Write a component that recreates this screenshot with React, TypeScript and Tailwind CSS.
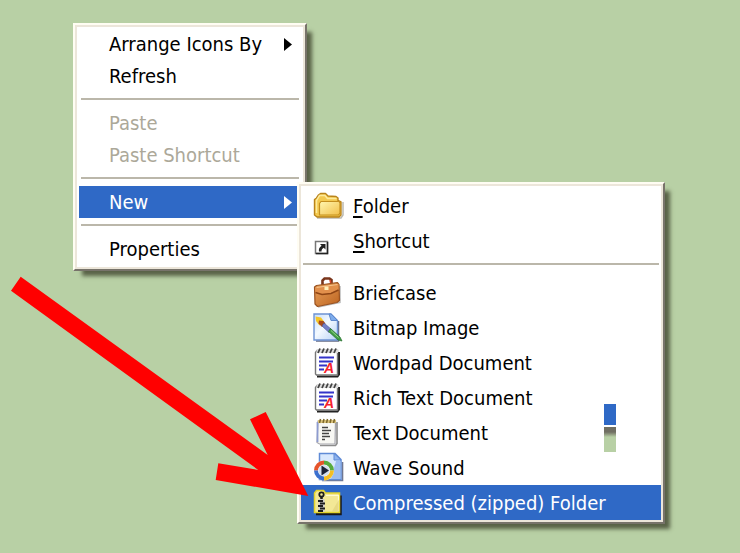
import type { ReactNode } from "react";

function FolderIcon() {
  return (
    <svg viewBox="0 0 32 32" className="size-8" aria-hidden="true">
      <defs>
        <linearGradient id="folderFront" x1="0" y1="0" x2="1" y2="1">
          <stop offset="0" stopColor="#fff6b0" />
          <stop offset="1" stopColor="#f2c04a" />
        </linearGradient>
      </defs>
      <path d="M4 28h24l2-3V12" fill="none" stroke="#8d8a7c" strokeWidth="1.5" opacity=".6" />
      <path
        d="M1.500 25V9.500l2-1.500 2-3 2-1.500h5l2.500 2.500 8 .5 2 1.500v2.500l3 1.500v13l-2 2h-22z"
        fill="#f3c94f"
        stroke="#b9831a"
        strokeWidth="1.4"
        strokeLinejoin="round"
      />
      <path d="M3.500 23V10.500l3-5h5.500l2.500 3h9" fill="none" stroke="#fdeb9c" strokeWidth="1.500" />
      <path
        d="M6.500 25V13.500l1.500-2H26l1 1.500v10l-1.500 2z"
        fill="url(#folderFront)"
        stroke="#c48f1f"
        strokeWidth="1.2"
        strokeLinejoin="round"
      />
    </svg>
  );
}

function ShortcutIcon() {
  return (
    <svg viewBox="0 0 32 32" className="size-8" aria-hidden="true">
      <rect x="2.500" y="16.500" width="12" height="12" fill="#fff" stroke="#777" strokeWidth="1.500" />
      <path d="M3 28.500h11.500V17" fill="none" stroke="#222" strokeWidth="1.500" />
      <path d="M7 19h5.500v5.500l-1.800-1.800c-1.500.8-2.200 2-2.200 3.800H6c-.6-2.300.4-4.300 2.600-5.800z" fill="#222" />
    </svg>
  );
}

function BriefcaseIcon() {
  return (
    <svg viewBox="0 0 32 32" className="size-8" aria-hidden="true">
      <defs>
        <linearGradient id="leather" x1="0" y1="0" x2="1" y2="1">
          <stop offset="0" stopColor="#e9a15c" />
          <stop offset="1" stopColor="#bd6420" />
        </linearGradient>
      </defs>
      <path d="M5 30l22-4.500V9" fill="none" stroke="#777" strokeWidth="1.500" opacity=".5" />
      <path d="M9.500 9V3.500l2-2h5l2 1.500V8" fill="none" stroke="#79351b" strokeWidth="2.600" />
      <path d="M17 3l1 4" stroke="#d5482b" strokeWidth="1.500" />
      <path
        d="M1.500 10l2-1.500L24.500 5.500l1.500 2 .5 16-2.500 2L4.500 29.500 2 27z"
        fill="url(#leather)"
        stroke="#9a5220"
        strokeWidth="1.200"
        strokeLinejoin="round"
      />
      <path d="M2.500 10.500l23-3.500v6l-7.500 3-9 1-6.500-2z" fill="#e2904c" />
      <path d="M2.500 15.500l6.500 2 9-1 7.500-3.500" fill="none" stroke="#8f4515" strokeWidth="1.400" />
      <path d="M3.500 10.500l21-3" stroke="#f5c58e" strokeWidth="1.200" />
      <rect x="11.500" y="9.500" width="4" height="3.500" fill="#fff0b8" />
    </svg>
  );
}

function BitmapIcon() {
  return (
    <svg viewBox="0 0 32 32" className="size-8" aria-hidden="true">
      <defs>
        <linearGradient id="canvas" x1="0" y1="0" x2="1" y2="1">
          <stop offset="0" stopColor="#c6defb" />
          <stop offset=".45" stopColor="#f3f9ff" />
          <stop offset="1" stopColor="#b7d1f5" />
        </linearGradient>
      </defs>
      <path d="M3 29h22.500V9" fill="none" stroke="#666c85" strokeWidth="1.500" />
      <path d="M1 2H18l6.500 6.500V28H1z" fill="url(#canvas)" stroke="#6d93d3" strokeWidth="1.400" />
      <path d="M16 2l2 6.500h6.500L18 2z" fill="#7dacec" stroke="#5d88cd" />
      <path d="M2.500 4.500l5.500 1 3 4-4.500 4-3.500-4.500z" fill="#f6c626" />
      <path d="M6 8.500l4.500.5 2 2.500-3.500 3.500-3.500-3.500z" fill="#a84b1c" />
      <path d="M11 11l7.500 6.500-2.500 3-7-6.500z" fill="#7480c8" stroke="#414c93" strokeWidth=".6" />
      <path d="M17.500 16.500l9.500 8.500 2 4-4-1-9.500-8.500z" fill="#3f9c42" stroke="#236b2b" strokeWidth=".7" />
      <path d="M18 18.500l7.500 7" stroke="#95d68a" strokeWidth="1" />
    </svg>
  );
}

function WordpadIcon() {
  return (
    <svg viewBox="0 0 32 32" className="size-8" aria-hidden="true">
      <path d="M4 29.500h20.500l1.500-2V5" fill="none" stroke="#222" strokeWidth="2" />
      <path d="M2.500 27V5.500l1.500-2h20.500V28H3.500z" fill="#fff" stroke="#777" strokeWidth="1.400" />
      <path d="M3.500 4.500H25" stroke="#ddd" strokeWidth="3" />
      <path
        d="M5 6l2-4.500M9 6l2-4.500M13 6l2-4.500M17 6l2-4.500M21 6l2-4.500"
        stroke="#444"
        strokeWidth="1.800"
      />
      <path d="M6 10.500h15M6 14.500h14M6 18.500h8M6 22.500h5" stroke="#3434c9" strokeWidth="2.200" />
      <text
        x="11"
        y="26"
        fill="#f5222d"
        className="font-['Liberation_Sans',sans-serif] text-[14px] font-bold italic"
      >
        A
      </text>
    </svg>
  );
}

function TextIcon() {
  return (
    <svg viewBox="0 0 32 32" className="size-8" aria-hidden="true">
      <path d="M7 28.500h15.500l1.500-2V5" fill="none" stroke="#8c8c8c" strokeWidth="1.600" />
      <path d="M5 4h17.500l-.5 23H6.500L4 25.500z" fill="#f8f8f4" stroke="#a5a5ac" strokeWidth="1.200" />
      <path d="M4.500 5v20" stroke="#8d9bd0" strokeWidth="1.800" />
      <path d="M5 4.500H23" stroke="#d9c27b" strokeWidth="3" />
      <path
        d="M6.500 6l1-4M10 6l1-4M13.500 6l1-4M17 6l1-4M20.500 6l1-4"
        stroke="#7c682c"
        strokeWidth="1.500"
      />
      <path d="M9 10.500h6M9 13.500h9M9 16.500h7M9 19.500h8M9 22.500h3" stroke="#444" strokeWidth="1.300" />
    </svg>
  );
}

function WaveIcon() {
  return (
    <svg viewBox="0 0 32 32" className="size-8" aria-hidden="true">
      <path d="M9 28.500h20.500V10" fill="none" stroke="#6f7791" strokeWidth="1.600" />
      <path d="M6.500 1.500H22l6 6V27.500H6.500z" fill="#d8e8fd" stroke="#5f8bd6" strokeWidth="1.500" />
      <path d="M23 9h4.500v18H18z" fill="#9dbdf0" />
      <path d="M21 1.500v6.500H28z" fill="#8fb4ee" stroke="#5f8bd6" />
      <circle cx="11" cy="18.500" r="10" fill="#fff" />
      <g fill="none" strokeWidth="4">
        <path d="M3 18.500a8 8 0 0 1 8-8" stroke="#e5542b" />
        <path d="M11 10.500a8 8 0 0 1 8 8" stroke="#58ab3d" />
        <path d="M19 18.500a8 8 0 0 1-8 8" stroke="#f4be24" />
        <path d="M11 26.500a8 8 0 0 1-8-8" stroke="#3b70cf" />
      </g>
      <circle cx="11" cy="18.500" r="5.500" fill="#d5e0ef" />
      <path d="M8.500 13.500l7.500 5-7.500 5z" fill="#1d2438" />
    </svg>
  );
}

function ZipIcon() {
  return (
    <svg viewBox="0 0 32 32" className="size-8" aria-hidden="true">
      <path d="M3 27h24.500V8.500" fill="none" stroke="#17171b" strokeWidth="2.500" />
      <path d="M1.500 25.500V6l2-2.500h7L12.500 6H26.500v19.500z" fill="#f3e896" stroke="#e2d32c" strokeWidth="1.500" />
      <path d="M13 8.500h12.500V24" fill="none" stroke="#fffbd0" strokeWidth="1.200" />
      <path d="M19 24.500h7v-12z" fill="#dfcf78" opacity=".6" />
      <circle cx="8.500" cy="7.500" r="2.200" fill="none" stroke="#1c1c1c" strokeWidth="1.800" />
      <path d="M8.500 9v4" stroke="#1c1c1c" strokeWidth="2.500" />
      <rect x="5.500" y="12" width="6" height="13" fill="#ccc" />
      <path d="M5 14h5M7 16.500h5M5 19h5M7 21.500h5M5 24h5" stroke="#1c1c1c" strokeWidth="1.800" />
    </svg>
  );
}

function SubmenuArrow() {
  return (
    <svg viewBox="0 0 8 13" className="h-[13px] w-2" fill="currentColor" aria-hidden="true">
      <path d="M0 0l8 6.500L0 13z" />
    </svg>
  );
}

const frame =
  "border-2 border-t-[#fffdf3] border-l-[#fffdf3] border-r-[#77736a] border-b-[#77736a] bg-white shadow-[7px_7px_4px_-2px_rgba(58,62,40,0.75)]";
const inner = "border-2 border-[#ece6da] bg-white";

type MenuItemProps = {
  children: ReactNode;
  active?: boolean;
  disabled?: boolean;
  submenu?: boolean;
};

function MenuItem({ children, active, disabled, submenu }: MenuItemProps) {
  return (
    <button
      type="button"
      role="menuitem"
      disabled={disabled}
      aria-haspopup={submenu ? "menu" : undefined}
      className={`flex h-8 w-full items-center justify-between pr-[9px] pl-[30px] text-left ${
        active ? "bg-[#2f69c6] text-white" : disabled ? "text-[#aca899]" : "text-black"
      }`}
    >
      <span>{children}</span>
      {submenu && <SubmenuArrow />}
    </button>
  );
}

function Separator() {
  return (
    <li role="separator" className="h-[15px] px-[2px] pt-[6px]">
      <div className="h-[2px] bg-[#bbb7aa]" />
    </li>
  );
}

const documentTypes = [
  { label: "Briefcase", icon: <BriefcaseIcon /> },
  { label: "Bitmap Image", icon: <BitmapIcon /> },
  { label: "Wordpad Document", icon: <WordpadIcon /> },
  { label: "Rich Text Document", icon: <WordpadIcon /> },
  { label: "Text Document", icon: <TextIcon /> },
  { label: "Wave Sound", icon: <WaveIcon /> },
  { label: "Compressed (zipped) Folder", icon: <ZipIcon />, active: true },
];

type NewItemProps = { icon: ReactNode; children: ReactNode; active?: boolean };

function NewItem({ icon, children, active }: NewItemProps) {
  return (
    <li>
      <button
        type="button"
        role="menuitem"
        className={`flex h-[35px] w-full items-center gap-2 pl-3 text-left ${
          active ? "bg-[#2f69c6] text-white" : "text-black"
        }`}
      >
        {icon}
        <span>{children}</span>
      </button>
    </li>
  );
}

function NewSubmenu() {
  return (
    <div className={`absolute -top-1 left-full z-10 -ml-1 w-[368px] ${frame}`}>
      <ul role="menu" aria-label="New" className={`pt-[2px] ${inner}`}>
        <NewItem icon={<FolderIcon />}>
          <span className="underline underline-offset-3">F</span>older
        </NewItem>
        <NewItem icon={<ShortcutIcon />}>
          <span className="underline underline-offset-3">S</span>hortcut
        </NewItem>
        <li role="separator" className="h-[17px] px-[2px] pt-[5px]">
          <div className="h-[2px] bg-[#bbb7aa]" />
        </li>
        {documentTypes.map(({ label, icon, active }) => (
          <NewItem key={label} icon={icon} active={active}>
            {label}
          </NewItem>
        ))}
      </ul>
      {/* stray repaint fragment left over the menu */}
      <div className="absolute right-[47px] bottom-[70px] w-3" aria-hidden="true">
        <div className="h-[21px] bg-[#2f69c6]" />
        <div className="h-[2px] bg-white" />
        <div className="h-[25px] bg-linear-to-b from-[#706f62] from-20% to-[#b8d0a5] to-40%" />
      </div>
    </div>
  );
}

export default function App() {
  return (
    <main className="relative min-h-screen bg-[#b8d0a5] pt-[23px] pl-[73px] font-['DejaVu_Sans_Condensed','DejaVu_Sans',sans-serif] text-[20px] leading-6">
      <div className={`w-[234px] ${frame}`}>
        <ul role="menu" aria-label="Desktop" className={`px-[2px] pt-[1px] pb-[2px] ${inner}`}>
          <li>
            <MenuItem submenu>Arrange Icons By</MenuItem>
          </li>
          <li>
            <MenuItem>Refresh</MenuItem>
          </li>
          <Separator />
          <li>
            <MenuItem disabled>Paste</MenuItem>
          </li>
          <li>
            <MenuItem disabled>Paste Shortcut</MenuItem>
          </li>
          <Separator />
          <li className="relative">
            <MenuItem active submenu>
              New
            </MenuItem>
            <NewSubmenu />
          </li>
          <Separator />
          <li>
            <MenuItem>Properties</MenuItem>
          </li>
        </ul>
      </div>
      <svg
        viewBox="0 0 310 500"
        className="pointer-events-none absolute top-0 left-0 z-20 h-[500px] w-[310px]"
        aria-hidden="true"
      >
        <path
          d="M20.700 276.700L11 290.700 258.300 470 218.300 463.300 215.700 480 308.300 496 265.700 412 250 419.300 267.700 455z"
          fill="#ff0000"
        />
      </svg>
    </main>
  );
}
